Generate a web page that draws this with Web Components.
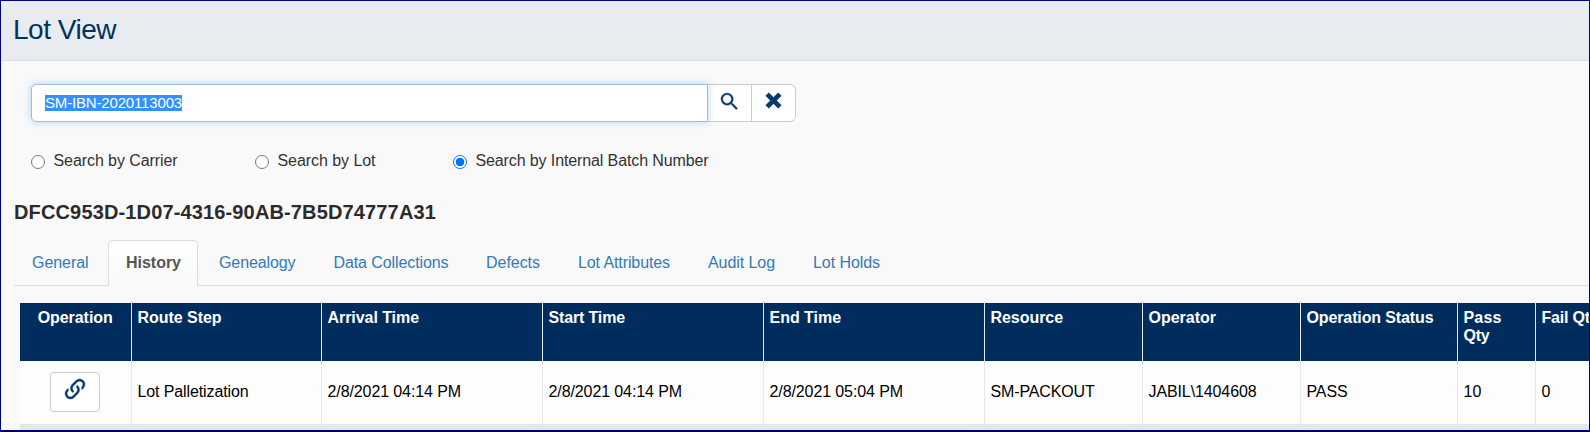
<!DOCTYPE html>
<html lang="en"><head><meta charset="utf-8"><title>Lot View</title>
<style>
html,body{margin:0;height:432px;overflow:hidden}
body{font:16px/18px "Liberation Sans",Arial,sans-serif;color:#333;background:#f9f9f9}
</style></head><body><lot-view></lot-view>
<script>
const define=(name,html,init)=>customElements.define(name,class extends HTMLElement{
  connectedCallback(){
    if(this.shadowRoot)return;
    const t=document.createElement('template');
    t.innerHTML=typeof html==='function'?html(this):html;
    this.attachShadow({mode:'open'}).append(t.content.cloneNode(true));
    if(init)init(this);
  }
});

// A single line of text tracked to a given width.
define('tracked-text','<style>:host{display:inline-block;white-space:nowrap}</style><slot></slot>',el=>{
  const w=+el.getAttribute('w'),n=el.textContent.length;
  if(w)el.style.letterSpacing=((w-el.getBoundingClientRect().width)/n)+'px';
});

define('page-header',`<style>
:host{display:flex;box-sizing:border-box;height:60px;padding:13px 0 0 12px;background:#e8ebf0;border-bottom:1px solid #d8dde5;color:#003359;font-size:28px;line-height:32px}
</style><slot></slot>`);

define('search-bar',`<style>
:host{display:flex;width:765px;height:38px;margin:23px 0 0 30px}
div{box-sizing:border-box;background:#fff;display:flex}
.in{width:677px;border:1px solid #9dbdda;border-radius:5px 0 0 5px;box-shadow:0 0 7px rgba(102,175,233,.5);padding:10px 0 0 13px;z-index:1}
.in tracked-text{height:16px;line-height:15px;background:#3390ff;color:#fff;font-size:15px}
.b{width:44px;border:1px solid #ccc;border-left:0;justify-content:center}
.b:last-child{border-radius:0 6px 6px 0}
svg{display:block}
</style><div class="in"><tracked-text w="137">SM-IBN-2020113003</tracked-text></div>
<div class="b"><svg width="23" height="23" viewBox="0 0 24 24" style="margin:5px 1px 0 0"><path fill="#063b6d" stroke="#063b6d" stroke-width=".3" d="M15.5 14h-.79l-.28-.27A6.471 6.471 0 0 0 16 9.500 6.500 6.500 0 1 0 9.500 16c1.610 0 3.090-.59 4.230-1.570l.27.28v.79l5 4.990L20.490 19l-4.990-5zm-6 0C7.010 14 5 11.990 5 9.500S7.010 5 9.500 5 14 7.010 14 9.500 11.990 14 9.500 14z"/></svg></div>
<div class="b"><svg width="17" height="17" viewBox="0 0 16 16" style="margin:7px 1px 0 0"><path stroke="#063b6d" stroke-width="4.500" d="M2 2 14 14M14 2 2 14"/></svg></div>`);

define('radio-option',`<style>
:host{display:flex;height:20px}
i{box-sizing:border-box;width:14px;height:14px;margin:4px 8.500px 0 0;border:1px solid #767676;border-radius:50%;background:#fff}
:host([checked]) i{border:1.500px solid #0075ff;background:radial-gradient(circle,#0075ff 4px,#fff 4.600px)}
::slotted(*){padding-top:1px}
</style><i></i><slot></slot>`);

define('tab-strip',`<style>
:host{display:flex;box-sizing:border-box;height:46px;margin-left:13px;border-bottom:1px solid #ddd}
</style><slot></slot>`);
define('tab-item',`<style>
:host{display:block;box-sizing:border-box;height:46px;flex:none;padding:13px 0 0 17px;border:1px solid transparent;color:#337ab7}
:host([active]){background:linear-gradient(#fff,#f9f9f9);border-color:#ddd;border-bottom:0;border-radius:5px 5px 0 0;color:#555;font-weight:bold}
</style><slot></slot>`,el=>{el.style.width=el.getAttribute('size')+'px';el.style.marginRight=(el.getAttribute('gap')||0)+'px'});

define('link-button',`<style>
:host{box-sizing:border-box;width:50px;height:40px;border:1px solid #ccc;border-radius:4px;background:#fff;display:flex;justify-content:center}
svg{display:block;margin-top:3px}
</style><svg width="26" height="26" viewBox="0 0 24 24"><path fill="#063b6d" stroke="#063b6d" stroke-width=".3" d="M10.590 13.410C11 13.800 11 14.440 10.590 14.830C10.200 15.220 9.560 15.220 9.170 14.830C7.220 12.880 7.220 9.710 9.170 7.760L12.710 4.220C14.660 2.270 17.830 2.270 19.780 4.220C21.730 6.170 21.730 9.340 19.780 11.290L18.290 12.780C18.300 11.960 18.170 11.140 17.890 10.360L18.360 9.880C19.540 8.710 19.540 6.810 18.360 5.640C17.190 4.460 15.290 4.460 14.120 5.640L10.590 9.170C9.410 10.340 9.410 12.240 10.590 13.410M13.410 9.170C13.800 8.780 14.440 8.780 14.830 9.170C16.780 11.120 16.780 14.290 14.830 16.240L11.290 19.780C9.340 21.730 6.170 21.730 4.220 19.780C2.270 17.830 2.270 14.660 4.220 12.710L5.710 11.220C5.700 12.040 5.830 12.860 6.110 13.650L5.640 14.120C4.460 15.290 4.460 17.190 5.640 18.360C6.810 19.540 8.710 19.540 9.880 18.360L13.410 14.830C14.590 13.660 14.590 11.760 13.410 10.590C13 10.200 13 9.560 13.410 9.170Z"/></svg>`);

const cols=[['Operation',75,'',0],['Route Step',84,'Lot Palletization',111],['Arrival Time',91.5,'2/8/2021 04:14 PM',133.5],['Start Time',76.5,'2/8/2021 04:14 PM',133.5],['End Time',71.5,'2/8/2021 05:04 PM',133.5],['Resource',72.500,'SM-PACKOUT',104],['Operator',67.5,'JABIL\\1404608',108],['Operation Status',127,'PASS',41],['Pass|Qty',38,'10',18],['Fail Qty',57,'0',9]];
define('history-table',()=>`<style>
:host{display:grid;grid-template-columns:112px 190px 221px 221px 221px 158px 158px 157px 78px 90px;grid-template-rows:58px 64px 5px;margin:17px 0 0 19px;width:1569px;overflow:hidden}
div{box-sizing:border-box;border-right:1px solid #e8e8e8;padding-left:5.500px}
.h{background:#002d5d;color:#fff;font-weight:bold;padding-top:6px}
.c{background:#fdfdfd;color:#000;border-bottom:1px solid #e8e8e8;padding-top:22px}
.s{background:#dfe8f2}
.h:first-of-type{padding-left:17.700px}
.l{padding:11px 0 0 30px}
</style>`+cols.map(c=>`<div class="h">${c[0].split('|').map((t,i)=>`<tracked-text w="${i?26:c[1]}">${t}</tracked-text>`).join('<br>')}</div>`).join('')
+cols.map((c,i)=>i?`<div class="c"><tracked-text w="${c[3]}">${c[2]}</tracked-text></div>`:'<div class="c l"><link-button></link-button></div>').join('')
+cols.map(()=>'<div class="s"></div>').join(''));

define('lot-view',`<style>
:host{display:block;box-sizing:border-box;width:1590px;height:432px;overflow:hidden;border:1px solid #000080;border-bottom:0;background:#f9f9f9}
main{height:429px;overflow:hidden}
.r{display:flex;margin:29px 0 0 30px}
.id{margin:29px 0 0 13px;height:40px;font-size:20px;line-height:24px;font-weight:bold;color:#2b2b2b}
footer{height:2px;background:#000;border-top:1px solid #000080;box-sizing:border-box}
</style><main>
<page-header><tracked-text w="103">Lot View</tracked-text></page-header>
<search-bar></search-bar>
<div class="r"><radio-option style="width:224px"><tracked-text w="124">Search by Carrier</tracked-text></radio-option><radio-option style="width:198px"><tracked-text w="98">Search by Lot</tracked-text></radio-option><radio-option checked><tracked-text w="233">Search by Internal Batch Number</tracked-text></radio-option></div>
<div class="id"><tracked-text w="422">DFCC953D-1D07-4316-90AB-7B5D74777A31</tracked-text></div>
<tab-strip><tab-item size="92" gap="2"><tracked-text w="56.5">General</tracked-text></tab-item><tab-item active size="90" gap="3"><tracked-text w="55">History</tracked-text></tab-item><tab-item size="114.5"><tracked-text w="76.500">Genealogy</tracked-text></tab-item><tab-item size="152.5"><tracked-text w="115">Data Collections</tracked-text></tab-item><tab-item size="92"><tracked-text w="54">Defects</tracked-text></tab-item><tab-item size="130"><tracked-text w="92">Lot Attributes</tracked-text></tab-item><tab-item size="105"><tracked-text w="67">Audit Log</tracked-text></tab-item><tab-item size="103"><tracked-text w="67">Lot Holds</tracked-text></tab-item></tab-strip>
<history-table></history-table></main><footer></footer>`);
</script></body></html>
